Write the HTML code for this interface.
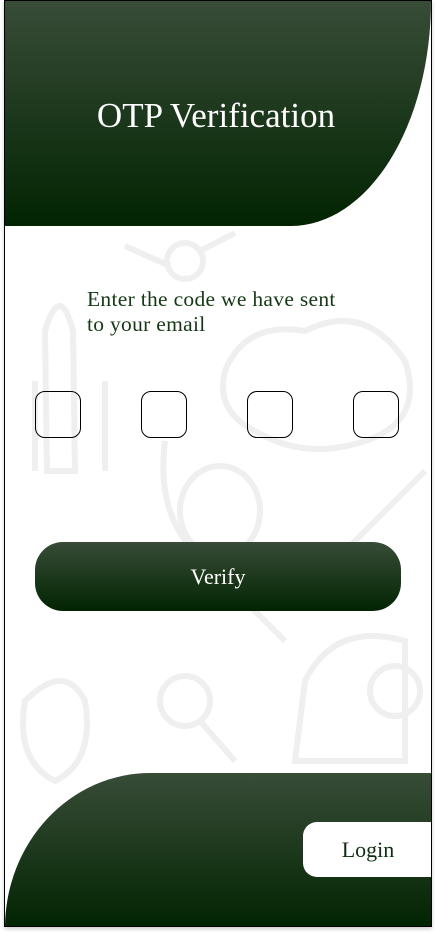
<!DOCTYPE html>
<html><head><meta charset="utf-8"><style>
html,body{margin:0;padding:0;background:#fff;}
body{width:436px;height:934px;position:relative;overflow:hidden;font-family:"Liberation Serif",serif;}
.frame{position:absolute;left:4px;top:0;width:426px;height:925px;border:1px solid #000;box-shadow:0 2px 4px rgba(0,0,0,0.2);overflow:hidden;background:#fff;}
.g{background:linear-gradient(#384c37,#022402);}
.top{position:absolute;left:0;top:0;width:426px;height:225px;border-bottom-right-radius:140px 225px;}
.title{position:absolute;left:0;width:422px;top:95px;text-align:center;color:#fff;font-size:35px;}
.bot{position:absolute;left:0;top:772px;width:427px;height:155px;border-top-left-radius:150px 160px;}
.login{position:absolute;left:298px;top:821px;width:130px;height:55px;background:#fff;border-radius:14px 0 0 14px;color:#0f2e0f;font-size:22px;line-height:55px;text-align:center;}
.msg{position:absolute;left:82px;top:286px;color:#153815;font-size:21.5px;line-height:25px;letter-spacing:0.3px;}
.box{position:absolute;top:390px;width:44px;height:45px;border:1px solid #000;border-radius:10px;}
.verify{position:absolute;left:30px;top:541px;width:366px;height:69px;border-radius:28px;color:#fff;font-size:22px;line-height:70px;text-align:center;}
svg.bg{position:absolute;left:0;top:0;}
</style></head><body>
<div class="frame">
<svg class="bg" width="427" height="925" fill="none" stroke="#efefef" stroke-width="6">
<path d="M40 330 Q55 280 68 330 L70 470 L42 470 Z"/>
<path d="M30 380 L30 470 M100 380 L100 470"/>
<path d="M220 370 Q240 320 300 330 Q360 300 400 360 Q420 420 360 440 Q300 460 250 430 Q210 410 220 370Z"/>
<circle cx="180" cy="260" r="18"/><path d="M195 250 L230 232 M165 265 L120 245"/>
<path d="M160 440 Q150 520 200 560 Q260 620 280 640"/>
<ellipse cx="215" cy="510" rx="40" ry="45"/>
<path d="M300 680 Q330 620 400 640 L400 760 L290 760 Z"/>
<circle cx="390" cy="690" r="25"/>
<path d="M20 700 Q60 660 80 700 Q90 760 50 780 Q10 760 20 700Z"/>
<circle cx="180" cy="700" r="25"/><path d="M195 720 L230 760"/>
<path d="M330 560 L420 470"/>
</svg>
<div class="top g"><div class="title">OTP Verification</div></div>
<div class="msg">Enter the code we have sent<br>to your email</div>
<div class="box" style="left:30px"></div>
<div class="box" style="left:136px"></div>
<div class="box" style="left:242px"></div>
<div class="box" style="left:348px"></div>
<div class="verify g">Verify</div>
<div class="bot g"></div>
<div class="login">Login</div>
</div>
</body></html>
